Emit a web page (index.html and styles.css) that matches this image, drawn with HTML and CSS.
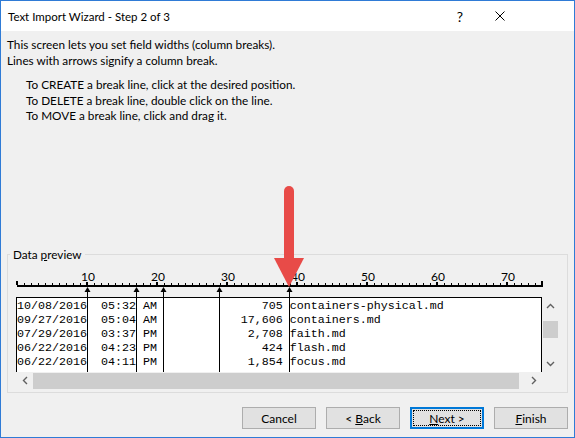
FILE: index.html
```html
<!DOCTYPE html>
<html lang="en">
<head>
  <meta charset="UTF-8">
  <title>Text Import Wizard - Step 2 of 3</title>
  <link rel="stylesheet" href="styles.css">
</head>
<body>

  <div class="window">
    <div class="titlebar">
      <span class="title">Text Import Wizard - Step 2 of 3</span>
      <span class="tb-btn help">?</span>
      <span class="tb-btn close">
        <svg width="10" height="10" viewBox="0 0 10 10"><path d="M0.5 0.5L9.5 9.5M9.5 0.5L0.5 9.5" stroke="#000" stroke-width="1"/></svg>
      </span>
    </div>

    <div class="content">
      <p class="intro">This screen lets you set field widths (column breaks).<br>Lines with arrows signify a column break.</p>
      <ul class="steps">
        <li>To CREATE a break line, click at the desired position.</li>
        <li>To DELETE a break line, double click on the line.</li>
        <li>To MOVE a break line, click and drag it.</li>
      </ul>

      <!-- Data preview -->
      <div class="group">
        <span class="legend">Data <u>p</u>review</span>

        <svg class="ruler" width="543" height="42" viewBox="0 0 543 42">
          <defs>
            <pattern id="tick" x="1" y="0" width="7" height="42" patternUnits="userSpaceOnUse">
              <rect x="0" y="28" width="1" height="2" fill="#000"/>
            </pattern>
          </defs>
          <rect x="1" y="28" width="526" height="2" fill="url(#tick)"/>
          <rect x="1" y="30" width="526" height="2" fill="#000"/>
          <rect x="0" y="26" width="2" height="4" fill="#000"/>
          <rect x="70" y="27" width="2" height="3" fill="#000"/>
          <rect x="140" y="27" width="2" height="3" fill="#000"/>
          <rect x="210" y="27" width="2" height="3" fill="#000"/>
          <rect x="280" y="27" width="2" height="3" fill="#000"/>
          <rect x="350" y="27" width="2" height="3" fill="#000"/>
          <rect x="420" y="27" width="2" height="3" fill="#000"/>
          <rect x="490" y="27" width="2" height="3" fill="#000"/>
          <rect x="525" y="26" width="2" height="4" fill="#000"/>
          <text x="72" y="26">10</text>
          <text x="142" y="26">20</text>
          <text x="212" y="26">30</text>
          <text x="282" y="26">40</text>
          <text x="352" y="26">50</text>
          <text x="422" y="26">60</text>
          <text x="492" y="26">70</text>
        </svg>

        <div class="scroller">
          <div class="data">
<pre>10/08/2016  05:32 AM               705 containers-physical.md
09/27/2016  05:04 AM            17,606 containers.md
07/29/2016  03:37 PM             2,708 faith.md
06/22/2016  04:23 PM               424 flash.md
06/22/2016  04:11 PM             1,854 focus.md</pre>
          </div>
          <div class="vscroll">
            <span class="sb-btn"><svg width="9" height="6" viewBox="0 0 9 6"><path d="M1 5L4.5 1.5L8 5" fill="none" stroke="#606060" stroke-width="1.4"/></svg></span>
            <span class="v-thumb"></span>
            <span class="sb-btn sb-end"><svg width="9" height="6" viewBox="0 0 9 6"><path d="M1 1L4.5 4.5L8 1" fill="none" stroke="#606060" stroke-width="1.4"/></svg></span>
          </div>
          <div class="hscroll">
            <span class="sb-btn"><svg width="6" height="9" viewBox="0 0 6 9"><path d="M5 1L1.5 4.5L5 8" fill="none" stroke="#606060" stroke-width="1.4"/></svg></span>
            <span class="h-thumb"></span>
            <span class="sb-btn sb-end"><svg width="6" height="9" viewBox="0 0 6 9"><path d="M1 1L4.5 4.5L1 8" fill="none" stroke="#606060" stroke-width="1.4"/></svg></span>
          </div>
          <div class="corner"></div>
        </div>

        <!-- column breaks -->
        <svg class="breaks" width="543" height="117" viewBox="0 0 543 117">
          <g fill="#000">
            <path d="M71.5 32L74.5 37H68.5Z"/><rect x="71" y="33" width="1" height="84"/>
            <path d="M120.5 32L123.5 37H117.5Z"/><rect x="120" y="33" width="1" height="84"/>
            <path d="M147.5 32L150.5 37H144.5Z"/><rect x="147" y="33" width="1" height="84"/>
            <path d="M203.5 32L206.5 37H200.5Z"/><rect x="203" y="33" width="1" height="84"/>
            <path d="M273.5 32L276.5 37H270.5Z"/><rect x="273" y="33" width="1" height="84"/>
          </g>
        </svg>
      </div>

      <div class="buttons">
        <button class="btn">Cancel</button>
        <button class="btn">&lt; <u>B</u>ack</button>
        <button class="btn default"><u>N</u>ext &gt;</button>
        <button class="btn"><u>F</u>inish</button>
      </div>
    </div>

    <!-- red pointer -->
    <svg class="annotation" width="34" height="108" viewBox="0 0 34 108">
      <rect x="11" y="3" width="10" height="78" rx="5" fill="#e84b48"/>
      <path d="M1 75H31L16 104Z" fill="#e84b48"/>
    </svg>
  </div>

</body>
</html>
```

FILE: styles.css
```css
body {
  margin: 0;
  font-family: Lato, 'Liberation Sans', sans-serif;
  font-size: 11.75px;
  color: #000;
}

.window {
  position: relative;
  width: 575px;
  height: 438px;
  box-sizing: border-box;
  border: 1px solid #2f7bd6;
  background: #f0f0f0;
  display: flex;
  flex-direction: column;
}

.titlebar {
  height: 30px;
  background: #fff;
  display: flex;
  align-items: center;
  padding: 0 54px 0 7px;
}

.title {
  flex: 1;
  font-size: 11.5px;
}

.tb-btn {
  width: 40px;
  display: flex;
  justify-content: center;
  align-items: center;
}

.help {
  font-size: 14px;
}

.content {
  flex: 1;
  display: flex;
  flex-direction: column;
  padding: 0 6px 8px 6px;
}

.intro {
  margin: 6px 0 0;
  line-height: 16px;
}

.steps {
  list-style: none;
  margin: 8px 0 0;
  padding-left: 19px;
  line-height: 15.5px;
}

/* Data preview */
.group {
  position: relative;
  margin-top: auto;
  height: 139px;
  box-sizing: border-box;
  border: 1px solid #dcdcdc;
  padding: 0 7px 3px 8px;
}

.legend {
  position: absolute;
  top: -7px;
  left: 2px;
  padding: 0 3px;
  line-height: 14px;
  background: #f0f0f0;
}

.ruler {
  display: block;
}

.ruler text {
  font-family: Lato, 'Liberation Sans', sans-serif;
  font-size: 12px;
  text-anchor: middle;
}

.scroller {
  display: grid;
  grid-template-columns: 526px 17px;
  grid-template-rows: 75px 17px;
}

.data {
  background: #fff;
  border: 1px solid #000;
  border-bottom: 0;
  overflow: hidden;
}

.data pre {
  margin: 0;
  padding-top: 1px;
  font-family: 'Liberation Mono', monospace;
  font-size: 11.666px;
  line-height: 14px;
}

.vscroll {
  display: flex;
  flex-direction: column;
  align-items: center;
}

.hscroll {
  display: flex;
  align-items: center;
}

.sb-btn {
  width: 17px;
  height: 17px;
  display: flex;
  justify-content: center;
  align-items: center;
  flex: none;
}

.vscroll .sb-end {
  margin-top: auto;
}

.hscroll .sb-end {
  margin-left: auto;
}

.v-thumb {
  width: 15px;
  height: 17px;
  margin-top: 7px;
  background: #cdcdcd;
}

.h-thumb {
  width: 486px;
  height: 16px;
  margin-top: 1px;
  background: #cdcdcd;
}

.breaks {
  position: absolute;
  left: 8px;
  top: 0;
  pointer-events: none;
}

/* Buttons */
.buttons {
  display: flex;
  justify-content: flex-end;
  gap: 10px;
  margin-top: 14px;
}

.btn {
  position: relative;
  width: 74px;
  height: 22px;
  box-sizing: border-box;
  border: 1px solid #adadad;
  background: #e1e1e1;
  font-family: Lato, 'Liberation Sans', sans-serif;
  font-size: 12px;
  color: #000;
  padding: 0;
}

.btn.default {
  border: 2px solid #0078d7;
}

.btn.default::after {
  content: '';
  position: absolute;
  inset: 1px;
  border: 1px dotted #000;
}

.annotation {
  position: absolute;
  left: 272px;
  top: 182px;
}
```
